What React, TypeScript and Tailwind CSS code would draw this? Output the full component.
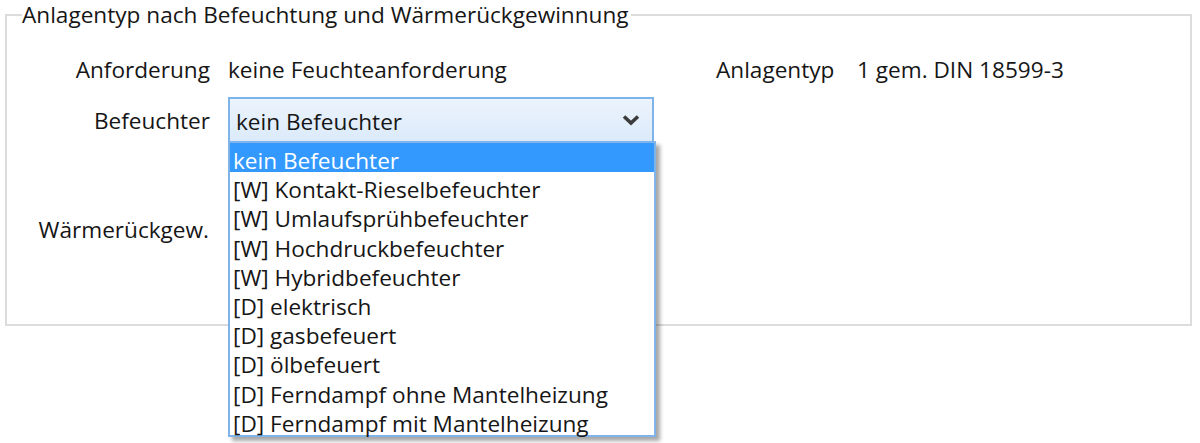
const options = [
  'kein Befeuchter',
  '[W] Kontakt-Rieselbefeuchter',
  '[W] Umlaufsprühbefeuchter',
  '[W] Hochdruckbefeuchter',
  '[W] Hybridbefeuchter',
  '[D] elektrisch',
  '[D] gasbefeuert',
  '[D] ölbefeuert',
  '[D] Ferndampf ohne Mantelheizung',
  '[D] Ferndampf mit Mantelheizung',
]

function Chevron() {
  return (
    <svg width="18" height="12" viewBox="0 0 18 12" className="text-[#3c3c3c]">
      <path d="M2 2.5 L9 9 L16 2.5" fill="none" stroke="currentColor" strokeWidth="3.6" />
    </svg>
  )
}

export default function App() {
  return (
    <div className="w-[1200px] h-[443px] bg-white text-[#161616] text-[22.6px] font-['Open_Sans','Noto_Sans',sans-serif] overflow-hidden">
      <fieldset className="ml-[5px] w-[1187px] h-[326px] border-2 border-[#dcdcdc] pl-[15px]">
        <legend className="leading-[30px] pr-[2px]">Anlagentyp nach Befeuchtung und Wärmerückgewinnung</legend>

        <div className="pt-[17px] flex flex-col">
          <div className="flex items-center h-[46px]">
            <span className="w-[188px] text-right">Anforderung</span>
            <span className="ml-[18px] w-[488px]">keine Feuchteanforderung</span>
            <span className="w-[141px]">Anlagentyp</span>
            <span>1 gem. DIN 18599-3</span>
          </div>

          <div className="flex items-center h-[46px] mt-[4px]">
            <span className="w-[188px] text-right pt-[2px]">Befeuchter</span>
            <div className="relative ml-[18px] w-[426px] h-[46px]">
              <div className="flex items-center justify-between h-full border-2 border-[#7eb4ea] bg-gradient-to-b from-[#ecf4fc] to-[#dbeafa] pl-[6px] pr-[12px]">
                <span className="pt-[3px]">kein Befeuchter</span>
                <Chevron />
              </div>
              <ul className="absolute left-0 top-[44px] z-10 w-[428px] border-2 border-[#7eb4ea] bg-white shadow-[4px_4px_4px_rgba(0,0,0,0.35)]">
                {options.map((o, i) => (
                  <li
                    key={o}
                    className={
                      i === 0
                        ? 'h-[29.2px] leading-[29px] pt-[3px] pl-[3px] bg-[#3399ff] text-white'
                        : 'h-[29.2px] leading-[29px] pt-[3px] pl-[3px]'
                    }
                  >
                    {o}
                  </li>
                ))}
              </ul>
            </div>
          </div>

          <div className="flex items-center h-[46px] mt-[64px]">
            <span className="w-[187px] text-right">Wärmerückgew.</span>
          </div>
        </div>
      </fieldset>
    </div>
  )
}
